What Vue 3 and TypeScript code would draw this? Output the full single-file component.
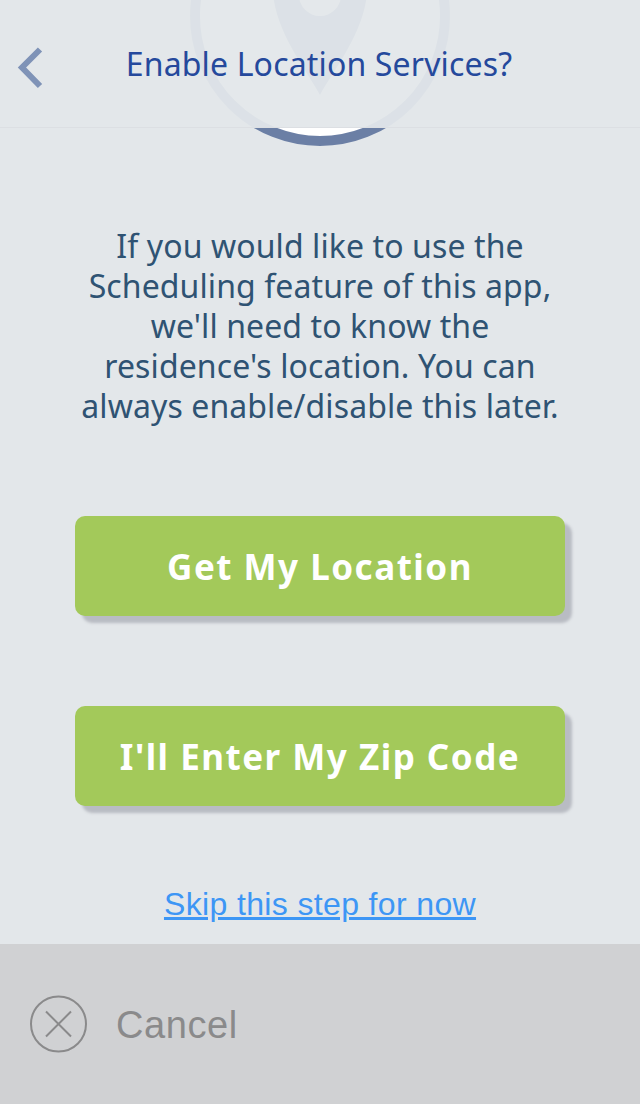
<script setup lang="ts">
const lines: string[] = [
  'If you would like to use the',
  'Scheduling feature of this app,',
  "we'll need to know the",
  "residence's location. You can",
  'always enable/disable this later.',
]
const actions: string[] = ['Get My Location', "I'll Enter My Zip Code"]
</script>

<template>
  <div class="screen">
    <svg class="hero" width="260" height="146" viewBox="0 0 260 146" aria-hidden="true">
      <circle cx="130" cy="16" r="125" fill="#fff" stroke="#6b7fa5" stroke-width="10" />
      <path d="M130 95C118 72 87 35 83 -6a47 47 0 0 1 94 0C173 35 142 72 130 95Z" fill="#6b7fa5" />
      <circle cx="130" cy="-5" r="21" fill="#fff" />
    </svg>

    <header class="header">
      <svg class="back" width="26" height="42" viewBox="0 0 26 42" aria-hidden="true">
        <path d="M23 2.500 5 20.500 23 39" fill="none" stroke="#7f93b7" stroke-width="6" />
      </svg>
      <h1 class="title">Enable Location Services?</h1>
    </header>

    <main class="main">
      <p class="intro">
        <span v-for="line in lines" :key="line" class="line">{{ line }}</span>
      </p>
      <div class="actions">
        <button v-for="a in actions" :key="a" class="action" type="button">{{ a }}</button>
      </div>
      <a class="skip" href="#">Skip this step for now</a>
    </main>

    <footer class="footer">
      <svg width="57" height="58" viewBox="0 0 57 58" aria-hidden="true">
        <circle cx="28.500" cy="29" r="27.500" fill="none" stroke="#8a8a8b" stroke-width="2" />
        <path d="M16 16.500 41 41.500M41 16.500 16 41.500" stroke="#8a8a8b" stroke-width="2" />
      </svg>
      <span class="cancel">Cancel</span>
    </footer>
  </div>
</template>

<style>
html, body { margin: 0; background: #e3e7ea; }
</style>

<style scoped>
.screen {
  position: relative;
  width: 640px;
  height: 1104px;
  overflow: hidden;
  display: flex;
  flex-direction: column;
  background: #e3e7ea;
  font-family: "Noto Sans", sans-serif;
}
.hero { position: absolute; top: 0; left: 190px; }
.header {
  position: relative;
  height: 128px;
  box-sizing: border-box;
  flex: none;
  display: flex;
  align-items: center;
  justify-content: center;
  background: rgba(227, 231, 234, 0.95);
  border-bottom: 1px solid #dcdfe3;
}
.back { position: absolute; left: 17px; top: 47px; }
.title {
  margin: 0 2px 0 0;
  font-size: 32px;
  font-weight: 400;
  line-height: 128px;
  color: #25499c;
  letter-spacing: 0.16px;
}
.main {
  position: relative;
  flex: 1;
  display: flex;
  flex-direction: column;
  align-items: center;
}
.intro {
  margin: 98px 0 0;
  font-size: 32px;
  line-height: 40px;
  color: #2f5373;
  text-align: center;
  letter-spacing: 0.1px;
}
.line { display: block; }
.actions {
  margin-top: 90px;
  display: flex;
  flex-direction: column;
  gap: 90px;
}
.action {
  width: 490px;
  height: 100px;
  padding: 0;
  border: 0;
  border-radius: 10px;
  background: #a3c95a;
  box-shadow: 7px 7px 3px #b9bcc3;
  color: #fff;
  font-family: inherit;
  font-size: 35px;
  font-weight: 700;
  letter-spacing: 1.5px;
}
.skip {
  margin-top: 78px;
  font-family: "Liberation Sans", sans-serif;
  font-size: 32px;
  line-height: 40px;
  letter-spacing: 0.36px;
  color: #3d96f5;
}
.footer {
  flex: none;
  height: 160px;
  box-sizing: border-box;
  padding-left: 30px;
  display: flex;
  align-items: center;
  gap: 29px;
  background: #d0d1d3;
}
.cancel {
  font-family: "Liberation Sans", sans-serif;
  font-size: 38px;
  letter-spacing: 0.6px;
  color: #8a8a8b;
  padding-top: 2px;
}
</style>
